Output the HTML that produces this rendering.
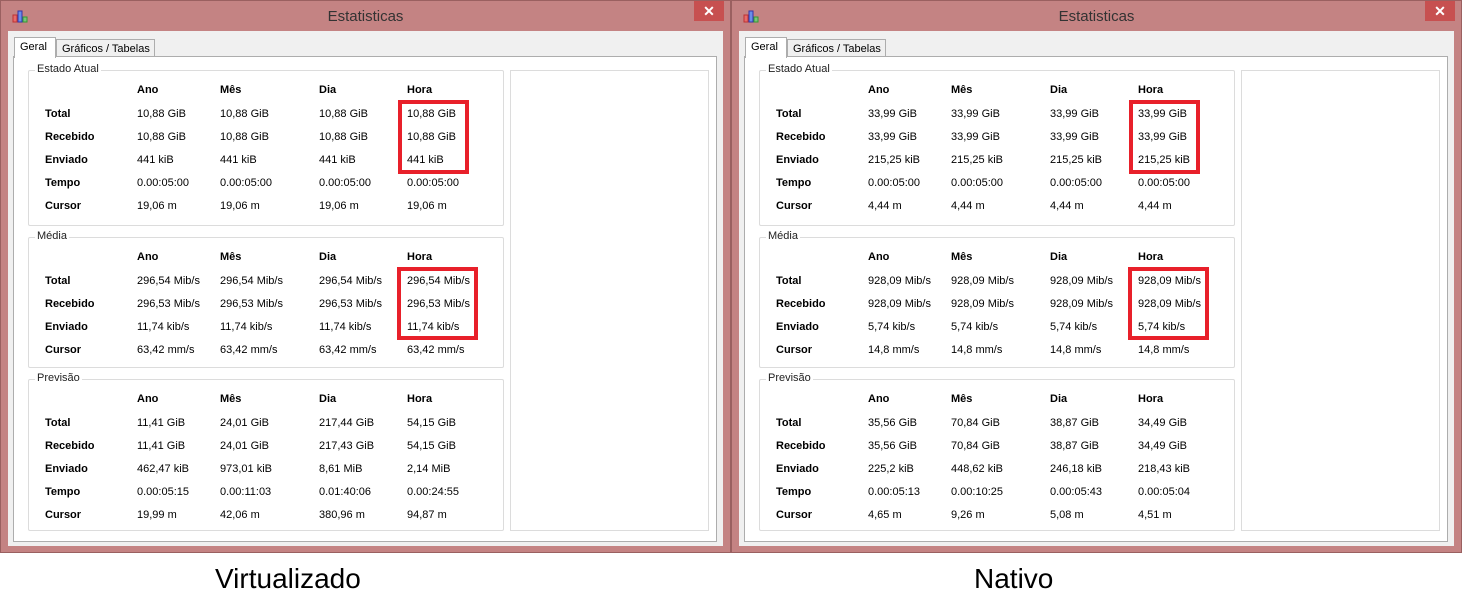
<!DOCTYPE html>
<html><head><meta charset="utf-8"><style>
*{margin:0;padding:0;box-sizing:border-box}
body{width:1462px;height:611px;background:#fff;position:relative;overflow:hidden;font-family:"Liberation Sans",sans-serif;font-size:11px;color:#000}
.win{position:absolute;top:0;width:731px;height:553px;background:#c48383;border:1px solid #9a6060}
.title{position:absolute;top:7px;left:0;right:0;text-align:center;font-size:15px;color:#333}
.close{position:absolute;top:0;right:6px;width:30px;height:20px;background:#c75050;color:#fff;text-align:center;font-size:14px;line-height:20px;font-weight:bold}
.icon{position:absolute;left:11px;top:9px;width:16px;height:13px}
.client{position:absolute;left:7px;top:30px;width:715px;height:515px;background:#f0f0f0}
.tab{position:absolute;height:18px;border:1px solid #adadad;border-bottom:none;padding:3px 5px;font-size:11px;white-space:nowrap}
.panel{position:absolute;left:5px;top:25px;width:704px;height:486px;background:#fff;border:1px solid #adadad}
.grp{position:absolute;left:14px;width:476px;border:1px solid #dcdcdc;border-radius:2px}
.grp .lg{position:absolute;top:-8px;left:6px;background:#fff;padding:0 2px;font-size:11px;color:#222}
.right{position:absolute;left:496px;top:13px;width:199px;height:461px;border:1px solid #dcdcdc}
table{position:absolute;left:31px;border-collapse:collapse}
td{height:23px;padding:0;font-size:11px;white-space:nowrap;vertical-align:middle}
td:nth-child(1){width:92px;font-weight:bold}
td:nth-child(2){width:83px}td:nth-child(3){width:99px}td:nth-child(4){width:88px}
tr.h td{font-weight:bold;height:25px}
.red{position:absolute;border:4px solid #e8202a}
.cap{position:absolute;top:563px;font-size:28px;color:#000}
</style></head><body>

<!-- Window 1 -->
<div class="win" style="left:0">
<svg class="icon" viewBox="0 0 16 13"><rect x="1" y="5" width="4" height="7" fill="#e86a6a" stroke="#b33"/><rect x="6" y="1" width="4" height="11" fill="#6a8ee8" stroke="#33a"/><rect x="11" y="7" width="4" height="5" fill="#7ac27a" stroke="#393"/></svg>
<div class="title">Estatisticas</div><div class="close">✕</div>
<div class="client">
<div class="tab" style="left:48px;top:8px;background:#f0f0f0;width:99px">Gráficos / Tabelas</div>
<div class="panel">
<div class="grp" style="top:13px;height:156px"><span class="lg">Estado Atual</span></div>
<div class="grp" style="top:180px;height:131px"><span class="lg">Média</span></div>
<div class="grp" style="top:322px;height:152px"><span class="lg">Previsão</span></div>
<div class="right"></div>
<table style="top:20px"><tr class="h"><td></td><td>Ano</td><td>Mês</td><td>Dia</td><td>Hora</td></tr>
<tr><td>Total</td><td>10,88 GiB</td><td>10,88 GiB</td><td>10,88 GiB</td><td>10,88 GiB</td></tr>
<tr><td>Recebido</td><td>10,88 GiB</td><td>10,88 GiB</td><td>10,88 GiB</td><td>10,88 GiB</td></tr>
<tr><td>Enviado</td><td>441 kiB</td><td>441 kiB</td><td>441 kiB</td><td>441 kiB</td></tr>
<tr><td>Tempo</td><td>0.00:05:00</td><td>0.00:05:00</td><td>0.00:05:00</td><td>0.00:05:00</td></tr>
<tr><td>Cursor</td><td>19,06 m</td><td>19,06 m</td><td>19,06 m</td><td>19,06 m</td></tr></table>
<table style="top:187px"><tr class="h"><td></td><td>Ano</td><td>Mês</td><td>Dia</td><td>Hora</td></tr>
<tr><td>Total</td><td>296,54 Mib/s</td><td>296,54 Mib/s</td><td>296,54 Mib/s</td><td>296,54 Mib/s</td></tr>
<tr><td>Recebido</td><td>296,53 Mib/s</td><td>296,53 Mib/s</td><td>296,53 Mib/s</td><td>296,53 Mib/s</td></tr>
<tr><td>Enviado</td><td>11,74 kib/s</td><td>11,74 kib/s</td><td>11,74 kib/s</td><td>11,74 kib/s</td></tr>
<tr><td>Cursor</td><td>63,42 mm/s</td><td>63,42 mm/s</td><td>63,42 mm/s</td><td>63,42 mm/s</td></tr></table>
<table style="top:329px"><tr class="h"><td></td><td>Ano</td><td>Mês</td><td>Dia</td><td>Hora</td></tr>
<tr><td>Total</td><td>11,41 GiB</td><td>24,01 GiB</td><td>217,44 GiB</td><td>54,15 GiB</td></tr>
<tr><td>Recebido</td><td>11,41 GiB</td><td>24,01 GiB</td><td>217,43 GiB</td><td>54,15 GiB</td></tr>
<tr><td>Enviado</td><td>462,47 kiB</td><td>973,01 kiB</td><td>8,61 MiB</td><td>2,14 MiB</td></tr>
<tr><td>Tempo</td><td>0.00:05:15</td><td>0.00:11:03</td><td>0.01:40:06</td><td>0.00:24:55</td></tr>
<tr><td>Cursor</td><td>19,99 m</td><td>42,06 m</td><td>380,96 m</td><td>94,87 m</td></tr></table>
</div>
<div class="tab" style="left:6px;top:6px;height:21px;background:#fff;width:42px">Geral</div>
</div>
<div class="red" style="left:397px;top:99px;width:71px;height:74px"></div>
<div class="red" style="left:396px;top:266px;width:81px;height:73px"></div>
</div>

<!-- Window 2 -->
<div class="win" style="left:731px">
<svg class="icon" viewBox="0 0 16 13"><rect x="1" y="5" width="4" height="7" fill="#e86a6a" stroke="#b33"/><rect x="6" y="1" width="4" height="11" fill="#6a8ee8" stroke="#33a"/><rect x="11" y="7" width="4" height="5" fill="#7ac27a" stroke="#393"/></svg>
<div class="title">Estatisticas</div><div class="close">✕</div>
<div class="client">
<div class="tab" style="left:48px;top:8px;background:#f0f0f0;width:99px">Gráficos / Tabelas</div>
<div class="panel">
<div class="grp" style="top:13px;height:156px"><span class="lg">Estado Atual</span></div>
<div class="grp" style="top:180px;height:131px"><span class="lg">Média</span></div>
<div class="grp" style="top:322px;height:152px"><span class="lg">Previsão</span></div>
<div class="right"></div>
<table style="top:20px"><tr class="h"><td></td><td>Ano</td><td>Mês</td><td>Dia</td><td>Hora</td></tr>
<tr><td>Total</td><td>33,99 GiB</td><td>33,99 GiB</td><td>33,99 GiB</td><td>33,99 GiB</td></tr>
<tr><td>Recebido</td><td>33,99 GiB</td><td>33,99 GiB</td><td>33,99 GiB</td><td>33,99 GiB</td></tr>
<tr><td>Enviado</td><td>215,25 kiB</td><td>215,25 kiB</td><td>215,25 kiB</td><td>215,25 kiB</td></tr>
<tr><td>Tempo</td><td>0.00:05:00</td><td>0.00:05:00</td><td>0.00:05:00</td><td>0.00:05:00</td></tr>
<tr><td>Cursor</td><td>4,44 m</td><td>4,44 m</td><td>4,44 m</td><td>4,44 m</td></tr></table>
<table style="top:187px"><tr class="h"><td></td><td>Ano</td><td>Mês</td><td>Dia</td><td>Hora</td></tr>
<tr><td>Total</td><td>928,09 Mib/s</td><td>928,09 Mib/s</td><td>928,09 Mib/s</td><td>928,09 Mib/s</td></tr>
<tr><td>Recebido</td><td>928,09 Mib/s</td><td>928,09 Mib/s</td><td>928,09 Mib/s</td><td>928,09 Mib/s</td></tr>
<tr><td>Enviado</td><td>5,74 kib/s</td><td>5,74 kib/s</td><td>5,74 kib/s</td><td>5,74 kib/s</td></tr>
<tr><td>Cursor</td><td>14,8 mm/s</td><td>14,8 mm/s</td><td>14,8 mm/s</td><td>14,8 mm/s</td></tr></table>
<table style="top:329px"><tr class="h"><td></td><td>Ano</td><td>Mês</td><td>Dia</td><td>Hora</td></tr>
<tr><td>Total</td><td>35,56 GiB</td><td>70,84 GiB</td><td>38,87 GiB</td><td>34,49 GiB</td></tr>
<tr><td>Recebido</td><td>35,56 GiB</td><td>70,84 GiB</td><td>38,87 GiB</td><td>34,49 GiB</td></tr>
<tr><td>Enviado</td><td>225,2 kiB</td><td>448,62 kiB</td><td>246,18 kiB</td><td>218,43 kiB</td></tr>
<tr><td>Tempo</td><td>0.00:05:13</td><td>0.00:10:25</td><td>0.00:05:43</td><td>0.00:05:04</td></tr>
<tr><td>Cursor</td><td>4,65 m</td><td>9,26 m</td><td>5,08 m</td><td>4,51 m</td></tr></table>
</div>
<div class="tab" style="left:6px;top:6px;height:21px;background:#fff;width:42px">Geral</div>
</div>
<div class="red" style="left:397px;top:99px;width:71px;height:74px"></div>
<div class="red" style="left:396px;top:266px;width:81px;height:73px"></div>
</div>

<div class="cap" style="left:215px">Virtualizado</div>
<div class="cap" style="left:974px">Nativo</div>
</body></html>
